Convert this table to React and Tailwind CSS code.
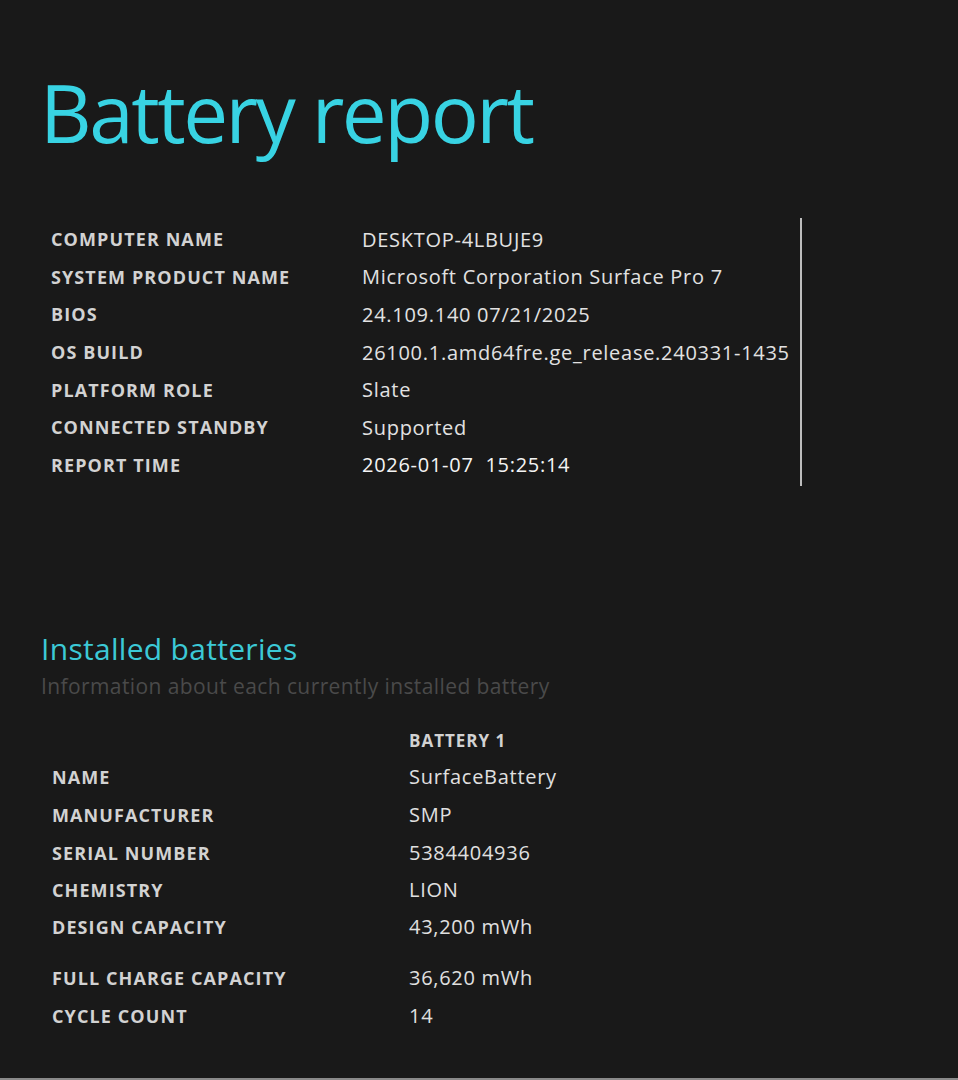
const systemInfo = [
  ["COMPUTER NAME", "DESKTOP-4LBUJE9"],
  ["SYSTEM PRODUCT NAME", "Microsoft Corporation Surface Pro 7"],
  ["BIOS", "24.109.140 07/21/2025"],
  ["OS BUILD", "26100.1.amd64fre.ge_release.240331-1435"],
  ["PLATFORM ROLE", "Slate"],
  ["CONNECTED STANDBY", "Supported"],
];

const batteryInfo = [
  ["NAME", "SurfaceBattery", "h-[38px]"],
  ["MANUFACTURER", "SMP", "h-[38px]"],
  ["SERIAL NUMBER", "5384404936", "h-[37px]"],
  ["CHEMISTRY", "LION", "h-[37px]"],
  ["DESIGN CAPACITY", "43,200 mWh", "h-[51px]"],
  ["FULL CHARGE CAPACITY", "36,620 mWh", "h-[38px]"],
  ["CYCLE COUNT", "14", "h-[38px]"],
];

export default function App() {
  return (
    <div className="min-h-[1080px] w-[958px] bg-[#191919] font-['Open_Sans',sans-serif] flex flex-col border-b-2 border-[#8a8a8a]">
      <h1 className="pl-[40px] pt-[64px] text-[80px] font-normal leading-[96px] tracking-[-2.5px] text-[#38d3e3]">
        Battery report
      </h1>

      <div className="mt-[61px] flex">
        <div className="flex flex-col pl-[51px]">
          {systemInfo.map(([label, value]) => (
            <div key={label} className="flex h-[37.6px] items-center">
              <div className="w-[311px] text-[18px] font-bold tracking-[1.1px] text-[#d2d2d2]">
                {label}
              </div>
              <div className="w-[438px] text-[20px] tracking-[0.72px] text-[#e2e2e2]">{value}</div>
            </div>
          ))}
          <div className="flex h-[37.6px] items-center">
            <div className="w-[311px] text-[18px] font-bold tracking-[1.1px] text-[#d2d2d2]">
              REPORT TIME
            </div>
            <div className="w-[438px] text-[20px] font-medium tracking-[0.72px] text-[#f4f4f4] whitespace-pre">
              {"2026-01-07  15:25:14"}
            </div>
          </div>
        </div>
        <div className="-mt-[3px] w-[2px] h-[268px] bg-[#bdbdbd]" />
      </div>

      <div className="mt-[144px] pl-[41px]">
        <h2 className="text-[30px] leading-[38px] tracking-[0.3px] text-[#3cc9d6]">
          Installed batteries
        </h2>
        <p className="text-[21px] leading-[36px] tracking-[0.4px] text-[#4a4a4a]">
          Information about each currently installed battery
        </p>
      </div>

      <div className="mt-[19px] pl-[52px] flex flex-col">
        <div className="flex h-[35px] items-center">
          <div className="w-[357px]" />
          <div className="text-[17px] font-bold tracking-[1px] text-[#d2d2d2]">BATTERY 1</div>
        </div>
        {batteryInfo.map(([label, value, h]) => (
          <div key={label} className={`flex items-start ${h}`}>
            <div className="w-[357px] text-[18px] font-bold tracking-[1.1px] text-[#d2d2d2] leading-[38px]">
              {label}
            </div>
            <div className="text-[20px] leading-[38px] tracking-[0.72px] text-[#e0e0e0]">{value}</div>
          </div>
        ))}
      </div>
    </div>
  );
}
